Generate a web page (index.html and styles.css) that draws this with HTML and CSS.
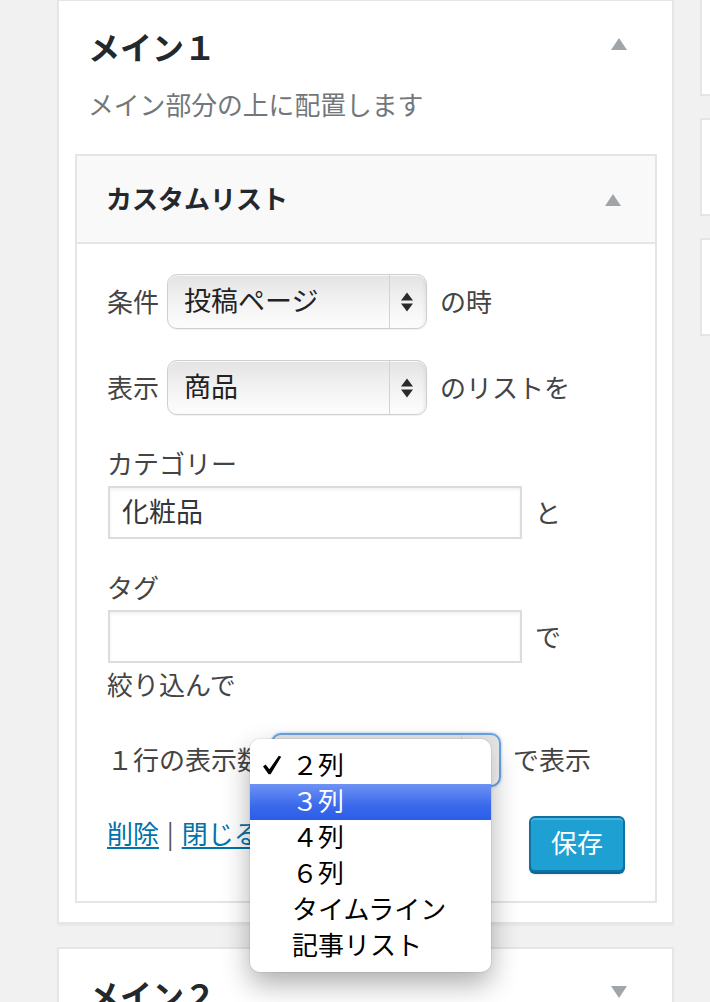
FILE: index.html
```html
<!DOCTYPE html>
<html lang="ja">
<head>
<meta charset="utf-8">
<title>ウィジェット</title>
<link rel="stylesheet" href="styles.css">
</head>
<body>
<div class="page">
  <div class="main-col">
    <section class="panel">
      <div class="panel-head">
        <h2 class="panel-title">メイン１</h2>
        <span class="tri tri-up"></span>
      </div>
      <p class="panel-desc">メイン部分の上に配置します</p>

      <div class="widget">
        <div class="widget-head">
          <h3 class="widget-title">カスタムリスト</h3>
          <span class="tri tri-up"></span>
        </div>
        <div class="widget-body">
          <div class="row">
            <span class="lbl">条件</span>
            <div class="mselect">
              <span class="mselect-val">投稿ページ</span>
              <span class="mselect-step"><svg width="12" height="20" viewBox="0 0 12 20"><path d="M6 0.5L12 8.5H0Z"/><path d="M0 11.5H12L6 19.5Z"/></svg></span>
            </div>
            <span class="lbl after">の時</span>
          </div>
          <div class="row row-gap">
            <span class="lbl">表示</span>
            <div class="mselect">
              <span class="mselect-val">商品</span>
              <span class="mselect-step"><svg width="12" height="20" viewBox="0 0 12 20"><path d="M6 0.5L12 8.5H0Z"/><path d="M0 11.5H12L6 19.5Z"/></svg></span>
            </div>
            <span class="lbl after">のリストを</span>
          </div>

          <div class="field-label">カテゴリー</div>
          <div class="field-row">
            <div class="tinput">化粧品</div>
            <span class="lbl after2">と</span>
          </div>

          <div class="field-label">タグ</div>
          <div class="field-row">
            <div class="tinput"></div>
            <span class="lbl after2">で</span>
          </div>
          <div class="field-label tight">絞り込んで</div>

          <div class="row row3">
            <span class="lbl">１行の表示数</span>
            <div class="mselect focus small">
              <span class="mselect-val"></span>
              <span class="mselect-step"><svg width="12" height="20" viewBox="0 0 12 20"><path d="M6 0.5L12 8.5H0Z"/><path d="M0 11.5H12L6 19.5Z"/></svg></span>
            </div>
            <span class="lbl after3">で表示</span>

            <ul class="menu">
              <li class="menu-item checked"><svg class="check" width="20" height="20" viewBox="0 0 20 20"><path d="M1 11.5L3.6 9.6L7.4 14.2L16.8 0.8L19.2 1.8L8.6 19.2L6.6 19.2Z"/></svg>２列</li>
              <li class="menu-item hl">３列</li>
              <li class="menu-item">４列</li>
              <li class="menu-item">６列</li>
              <li class="menu-item">タイムライン</li>
              <li class="menu-item">記事リスト</li>
            </ul>
          </div>

          <div class="actions">
            <div class="links"><a class="link" href="#">削除</a> <span class="sep">|</span> <a class="link" href="#">閉じる</a></div>
            <button class="btn-primary" type="button">保存</button>
          </div>
        </div>
      </div>
    </section>

    <section class="panel panel2">
      <div class="panel-head">
        <h2 class="panel-title">メイン２</h2>
        <span class="tri tri-down"></span>
      </div>
    </section>
  </div>

  <div class="side-col">
    <div class="side-box first"></div>
    <div class="side-box"></div>
    <div class="side-box"></div>
  </div>
</div>
</body>
</html>
```
FILE: styles.css
```css
* { box-sizing: border-box; }
html, body { margin: 0; padding: 0; }
body {
  background: #f1f1f1;
  width: 710px;
  height: 1002px;
  overflow: hidden;
  font-family: "Noto Sans CJK JP", "Noto Sans", sans-serif;
  color: #444;
}
.page { display: flex; align-items: flex-start; }
.main-col { width: 617px; margin-left: 57px; flex: none; }
.side-col {
  margin-left: 26px;
  width: 200px;
  flex: none;
  display: flex;
  flex-direction: column;
  gap: 22px;
}
.side-box {
  height: 98px;
  background: #fff;
  border: 2px solid #e5e5e5;
}
.side-box.first { margin-top: -4px; height: 100px; }

.panel {
  background: #fff;
  border: 2px solid #e6e6e6;
  box-shadow: 0 2px 2px rgba(0,0,0,.04);
  margin-top: -1px;
  padding: 27px 15px 19px 16px;
}
.panel2 { margin-top: 23px; height: 120px; }
.panel-head {
  display: flex;
  justify-content: space-between;
  align-items: flex-start;
  padding: 0 30px 0 13px;
  height: 40px;
}
.panel-title {
  margin: 0;
  font-size: 32px;
  line-height: 36px;
  padding-bottom: 4px;
  font-weight: 700;
  color: #23282d;
}
.tri { width: 0; height: 0; border-left: 8px solid transparent; border-right: 8px solid transparent; }
.tri-up { border-bottom: 12px solid #a0a5aa; }
.tri-down { border-top: 12px solid #a0a5aa; }
.panel-head .tri { margin-top: 10px; }
.panel-desc {
  margin: 19px 0 0;
  padding-left: 13px;
  font-size: 25.8px;
  line-height: 33px;
  padding-bottom: 3px;
  color: #72777c;
}

.widget {
  margin-top: 31px;
  border: 2px solid #e5e5e5;
  background: #fff;
}
.widget-head {
  height: 88px;
  background: #f9f9f9;
  border-bottom: 2px solid #e5e5e5;
  display: flex;
  align-items: center;
  justify-content: space-between;
  padding: 0 34px 0 29px;
}
.widget-title {
  margin: 0;
  font-size: 26px;
  line-height: 34px;
  padding-bottom: 2px;
  font-weight: 700;
  color: #23282d;
}
.widget-head .tri { margin-top: 2px; }
.widget-body { padding: 30px 30px 29px 30px; }

.row { display: flex; align-items: center; height: 55px; }
.row-gap { margin-top: 31px; }
.lbl { font-size: 26px; line-height: 33px; padding-bottom: 3px; color: #444; white-space: nowrap; }
.lbl.after { margin-left: 13px; }
.lbl.after2 { margin-left: 13px; }
.lbl.after3 { margin-left: 12px; }
.row .lbl:first-child { margin-right: 8px; }

.mselect {
  width: 260px;
  height: 55px;
  flex: none;
  display: flex;
  border: 1px solid #cfcfcf;
  border-radius: 10px;
  background: linear-gradient(#e3e3e3 0%, #eeeeee 35%, #f8f8f8 75%, #fdfdfd 100%);
  box-shadow: inset 0 1px 0 rgba(255,255,255,.8), inset -3px 0 4px -2px rgba(0,0,0,.08), 0 1px 1px rgba(0,0,0,.06);
}
.mselect-val {
  flex: 1;
  padding-left: 16px;
  font-size: 27px;
  line-height: 50px;
  padding-bottom: 3px;
  color: #222;
}
.mselect-step {
  width: 37px;
  flex: none;
  border-left: 1px solid #d2d2d2;
  display: flex;
  align-items: center;
  justify-content: center;
  padding-right: 2px;
}
.mselect-step svg { fill: #2a2a2a; display: block; }

.field-label { margin-top: 31px; font-size: 26px; line-height: 33px; padding-bottom: 3px; color: #444; }
.field-label.tight { margin-top: 4px; }
.field-row { display: flex; align-items: center; margin-top: 4px; }
.tinput {
  width: 414px;
  height: 53px;
  border: 2px solid #dcdcdc;
  box-shadow: inset 0 2px 3px rgba(0,0,0,.06);
  background: #fff;
  padding-left: 12px;
  font-size: 27px;
  line-height: 45px;
  padding-bottom: 3px;
  color: #32373c;
}
.field-row .tinput { margin-left: 1px; }

.row3 { margin-top: 30px; height: 54px; position: relative; }
.row3 .lbl:first-child { margin-right: 8px; }
.mselect.small { width: 230px; height: 54px; }
.mselect.focus {
  border: 2px solid #6aa2e0;
  box-shadow: 0 0 3px rgba(80,140,220,.6);
}
.mselect.focus .mselect-step { width: 38px; }

.menu {
  position: absolute;
  left: 143px;
  top: 6px;
  width: 241px;
  height: 233px;
  margin: 0;
  padding: 9px 0 0;
  list-style: none;
  background: #fff;
  border-radius: 10px;
  box-shadow: 0 0 0 1px rgba(0,0,0,.06), 0 12px 28px rgba(0,0,0,.32);
  z-index: 5;
}
.menu-item {
  height: 36px;
  padding-left: 42px;
  font-size: 26px;
  line-height: 31px;
  color: #000;
  position: relative;
  white-space: nowrap;
}
.menu-item .check { position: absolute; left: 12px; top: 7px; fill: #000; }
.menu-item.hl {
  background: linear-gradient(#6e93f4, #3a69ec 60%, #2b5de8);
  color: #fff;
}

.actions {
  margin-top: 29px;
  display: flex;
  justify-content: space-between;
  align-items: flex-start;
}
.links { font-size: 26px; line-height: 33px; padding-bottom: 3px; color: #444; }
.link { color: #0073aa; text-decoration: underline; text-underline-offset: 3px; }
.sep { color: #555; padding: 0 2px; }
.btn-primary {
  width: 96px;
  height: 56px;
  margin: 0;
  padding: 0 0 4px;
  border: 2px solid #0e73a4;
  border-radius: 6px;
  background: #1ea1d2;
  box-shadow: inset 0 2px 0 rgba(120,200,230,.5), 0 2px 0 #0b6997, 0 3px 2px rgba(0,0,0,.08);
  color: #fff;
  font-family: "Noto Sans CJK JP", "Noto Sans", sans-serif;
  font-size: 26px;
  line-height: 46px;
}
```
